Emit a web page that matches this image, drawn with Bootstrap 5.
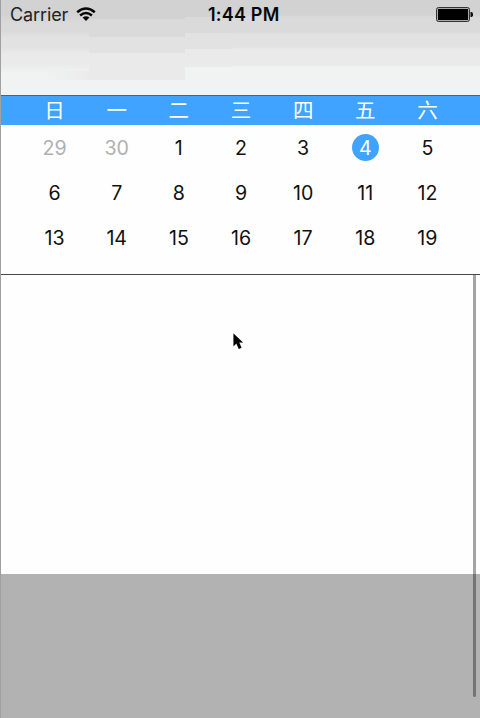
<!DOCTYPE html>
<html lang="zh">
<head>
<meta charset="utf-8">
<meta name="viewport" content="width=device-width, initial-scale=1">
<title>Calendar</title>
<link href="https://cdn.jsdelivr.net/npm/bootstrap@5.3.0/dist/css/bootstrap.min.css" rel="stylesheet">
<style>
body{width:480px;height:718px;font-family:Inter,"Noto Sans CJK SC",sans-serif;color:#111;background:#fefefe}
.screen{height:718px;border-left:1px solid #a0a0a0}
.top-area{height:95px;background:
linear-gradient(90deg,transparent 40px,rgba(234,234,234,.9) 90px) 0 71px/88px 9px no-repeat,
linear-gradient(#d2d2d2 14px,#dadada 24px 31px,#e2e2e2 38px 47px,#eaeaea 54px 64px,#f1f3f2 74px) 0 0/88px 95px no-repeat,
linear-gradient(#d2d2d2 19px,#dadada 19px 37px,#e2e2e2 37px 53px,#eaeaea 53px 80px,#f1f3f2 80px) 88px 0/96px 95px no-repeat,
linear-gradient(#d2d2d2 17px,#dadada 17px 33px,#e2e2e2 33px 49px,#eaeaea 49px 67px,#f1f3f2 67px) 184px 0/48px 95px no-repeat,
linear-gradient(#d2d2d2 15px,#dadada 17px 32px,#e2e2e2 34px 47px,#eaeaea 49px 65px,#f1f3f2 67px)}
.status{height:29px;padding:0 7px 0 9px;line-height:29px;font-size:18px;color:#222}
.carrier{width:58px;letter-spacing:-.1px}
.clock{left:207px;top:0;font-size:18px;font-weight:600;color:#080808;letter-spacing:.2px}
.weekdays{height:30px;background:#40a3ff;border-top:1px solid #2d6b9f;color:#fff}
.days{display:grid;grid-template-columns:repeat(7,62.15px);padding-left:22.5px;text-align:center}
.weekdays span{font:400 20.5px/27px "Noto Sans CJK SC",sans-serif}
.month{height:150px;border-bottom:1px solid #484848;grid-auto-rows:45px;font-size:19.6px;line-height:46px;align-content:start}
.other{color:#b0b0b0}
.today{display:inline-block;width:27px;height:27px;line-height:28px;background:#40a3ff;color:#fff}
.list-area{height:299px}
.footer-area{height:144px;background:#b2b2b2}
.scroller{right:4px;top:275px;width:3px;height:422px;border-radius:0 0 2px 2px;background:rgba(0,0,0,.35)}
.pointer{left:231px;top:331px}
</style>
<script src="https://cdn.jsdelivr.net/npm/bootstrap@5.3.0/dist/js/bootstrap.bundle.min.js"></script>
</head>
<body class="overflow-hidden">
<div class="screen position-relative">
<header class="top-area">
<div class="status d-flex align-items-center justify-content-between position-relative">
<div class="d-flex align-items-center gap-2"><span class="carrier">Carrier</span>
<svg width="20" height="15" viewBox="0 0 20 15" fill="none" stroke="#080808" stroke-width="2.5"><path d="M1.2 5.3Q10-2.4 18.8 5.3M4.1 8.5Q10 3.5 15.9 8.5"/><path d="M6.6 10.5Q10 7.9 13.4 10.5L10 14Z" fill="#080808" stroke="none"/></svg></div>
<span class="clock position-absolute">1:44 PM</span>
<svg width="37" height="15" viewBox="0 0 37 15"><rect x=".5" y=".5" width="33" height="14" rx="2" fill="#aaa" stroke="#333"/><rect x="2" y="2" width="30" height="11" fill="#000"/><path d="M34.5 5H36L37 6.5V8.5L36 10H34.5Z" fill="#111"/></svg>
</div>
</header>
<div class="weekdays days"><span>日</span><span>一</span><span>二</span><span>三</span><span>四</span><span>五</span><span>六</span></div>
<main class="month days">
<span class="other">29</span><span class="other">30</span><span>1</span><span>2</span><span>3</span><span><span class="today rounded-circle">4</span></span><span>5</span>
<span>6</span><span>7</span><span>8</span><span>9</span><span>10</span><span>11</span><span>12</span>
<span>13</span><span>14</span><span>15</span><span>16</span><span>17</span><span>18</span><span>19</span>
</main>
<section class="list-area"></section>
<footer class="footer-area"></footer>
<div class="scroller position-absolute"></div>
<svg class="pointer position-absolute" width="14" height="20" viewBox="0 0 14 20"><path d="M1.5 2.5V15.2L4.4 12.5L6.8 18L9.5 16.8L7.2 11.6H11Z" fill="#000" stroke="#ddd" stroke-width="1" paint-order="stroke"/></svg>
</div>
</body>
</html>
